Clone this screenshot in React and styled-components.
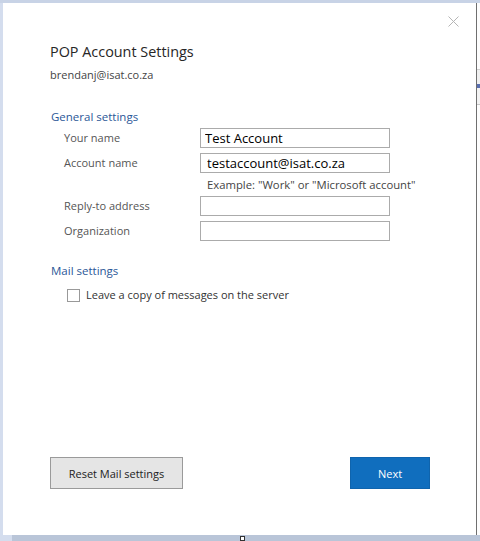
import React from 'react';
import styled, { createGlobalStyle } from 'styled-components';

const Global = createGlobalStyle`
  html, body { margin: 0; padding: 0; background: #d4ddee; }
  body { font-family: "Open Sans", "Noto Sans", sans-serif; }
`;

const Screen = styled.div`
  width: 480px;
  height: 541px;
  display: grid;
  grid-template-columns: 3px 473px 1px 3px;
  grid-template-rows: 3px 532px 6px;
  overflow: hidden;
`;

const TopStrip = styled.div`
  grid-column: 1 / -1;
  background: #c8d3e6;
`;

const LeftStrip = styled.div`
  background: #d4ddee;
`;

const Dialog = styled.div`
  position: relative;
  background: #fff;
  display: flex;
  flex-direction: column;
  padding: 38px 46px 0 47px;
  box-sizing: border-box;
`;

const Edge = styled.div`
  background: #6f6f6f;
`;

const Behind = styled.div`
  background: #fdfdfd;
  display: flex;
  flex-direction: column;
`;

const BehindLine = styled.div`
  height: ${({ h }) => h}px;
  background: ${({ c }) => c};
`;

const BottomStrip = styled.div`
  grid-column: 1 / -1;
  position: relative;
  background: linear-gradient(to right, #d4ddee 0 12px, #b9c5d8 12px);
`;

const Handle = styled.div`
  position: absolute;
  left: 240px;
  top: 1px;
  width: 3px;
  height: 3px;
  border: 1px solid #333;
  background: #fff;
`;

const Close = styled.button`
  position: absolute;
  top: 12px;
  right: 17px;
  width: 11px;
  height: 11px;
  padding: 0;
  border: 0;
  background: none;
`;

const Title = styled.h1`
  margin: 0;
  font-size: 14.4px;
  font-weight: 400;
  color: #262626;
  line-height: 22px;
`;

const Email = styled.div`
  margin-top: 4px;
  font-size: 11px;
  color: #444;
  line-height: 16px;
`;

const Section = styled.h2`
  margin: ${({ top }) => top}px 0 0 1px;
  font-size: 11.5px;
  font-weight: 400;
  color: #2b5797;
  line-height: 16px;
`;

const Fields = styled.div`
  margin-top: 3px;
  padding-left: 14px;
  display: grid;
  grid-template-columns: 136px 190px;
  row-gap: 5px;
  align-items: center;
`;

const Label = styled.label`
  font-size: 11px;
  color: #555;
  line-height: 20px;
`;

const Input = styled.input`
  box-sizing: border-box;
  width: 190px;
  height: 20px;
  margin: 0;
  border: 1px solid #ababab;
  padding: 0 4px 0 ${({ indent }) => indent || 4}px;
  font-family: "Open Sans", "Noto Sans", sans-serif;
  font-size: 13px;
  color: #000;
  outline: none;
`;

const Hint = styled.div`
  grid-column: 2;
  margin: -1px 0 -1px 7px;
  font-size: 11.3px;
  color: #444;
  white-space: nowrap;
  line-height: 15px;
`;

const CheckRow = styled.label`
  margin: 8px 0 0 17px;
  display: flex;
  align-items: center;
  gap: 6px;
  font-size: 11px;
  color: #333;
  line-height: 16px;
`;

const Box = styled.span`
  width: 11px;
  height: 11px;
  border: 1px solid #999;
  background: #fff;
`;

const Footer = styled.div`
  margin-top: auto;
  margin-bottom: 46px;
  display: flex;
  justify-content: space-between;
`;

const Button = styled.button`
  height: 32px;
  box-sizing: border-box;
  padding: 0;
  width: ${({ w }) => w}px;
  font-family: "Open Sans", "Noto Sans", sans-serif;
  font-size: 11px;
  border: 1px solid ${({ primary }) => (primary ? '#0f64ad' : '#9a9a9a')};
  background: ${({ primary }) => (primary ? '#106ebe' : '#e5e5e5')};
  color: ${({ primary }) => (primary ? '#fff' : '#222')};
`;

export default function App() {
  return (
    <>
      <Global />
      <Screen>
        <TopStrip />
        <LeftStrip />
        <Dialog>
          <Close aria-label="Close">
            <svg width="11" height="11" viewBox="0 0 11 11">
              <path d="M0.5 0.5 L10.5 10.5 M10.5 0.5 L0.5 10.5" stroke="#b5b5b5" strokeWidth="1" />
            </svg>
          </Close>
          <Title>POP Account Settings</Title>
          <Email>brendanj@isat.co.za</Email>

          <Section top={26}>General settings</Section>
          <Fields>
            <Label>Your name</Label>
            <Input defaultValue="Test Account" />
            <Label>Account name</Label>
            <Input defaultValue="testaccount@isat.co.za" indent={6} />
            <Hint>Example: "Work" or "Microsoft account"</Hint>
            <Label>Reply-to address</Label>
            <Input />
            <Label>Organization</Label>
            <Input />
          </Fields>

          <Section top={22}>Mail settings</Section>
          <CheckRow>
            <Box />
            Leave a copy of messages on the server
          </CheckRow>

          <Footer>
            <Button w={133}>Reset Mail settings</Button>
            <Button w={80} primary>Next</Button>
          </Footer>
        </Dialog>
        <Edge />
        <Behind>
          <BehindLine h={66} c="#fdfdfd" />
          <BehindLine h={1} c="#d0d0d0" />
          <BehindLine h={14} c="#f0f0f0" />
          <BehindLine h={4} c="#5a6fb0" />
          <BehindLine h={16} c="#f3f3f3" />
          <BehindLine h={1} c="#c8c8c8" />
        </Behind>
        <BottomStrip>
          <Handle />
        </BottomStrip>
      </Screen>
    </>
  );
}
